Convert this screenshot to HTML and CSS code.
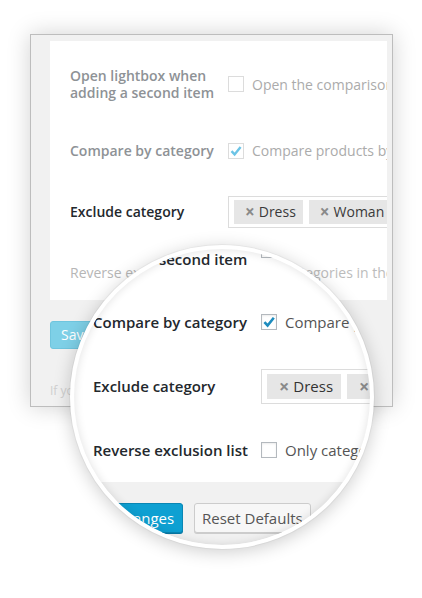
FILE: index.html
```html
<!DOCTYPE html>
<html>
<head>
<meta charset="utf-8">
<link rel="stylesheet" href="styles.css">
</head>
<body>
<div class="stage">
  <div class="card">
    <div class="panel">
      <div class="row row-first">
        <div class="label faded1">Open lightbox when<br>adding a second item</div>
        <div class="field"><span class="cb cb-faded"></span><span class="desc">Open the comparison lightbox</span></div>
      </div>
      <div class="row">
        <div class="label faded1">Compare by category</div>
        <div class="field"><span class="cb cb-faded"><svg viewBox="0 0 16 16" width="16" height="16"><path d="M3.5 8.2 L6.6 11.4 L12.6 4" fill="none" stroke="#6cc4e6" stroke-width="2.4"/></svg></span><span class="desc">Compare products by category</span></div>
      </div>
      <div class="row">
        <div class="label dark">Exclude category</div>
        <div class="field">
          <div class="tagbox">
            <span class="tag"><span class="x">×</span>Dress</span>
            <span class="tag"><span class="x">×</span>Woman</span>
          </div>
        </div>
      </div>
      <div class="row">
        <div class="label faded2">Reverse exclusion list</div>
        <div class="field"><span class="cb cb-faded"></span><span class="desc desc2">Only categories in the list</span></div>
      </div>
    </div>
    <div class="actions">
      <span class="btn btn-faded">Save Changes</span>
    </div>
    <p class="note">If you change these settings</p>
  </div>

  <div class="lens">
    <div class="zplane">
      <div class="zpanel">
        <div class="zrow zrow-first">
          <div class="zlabel">Open lightbox when<br>adding a second item</div>
          <div class="zfield"><span class="zcb"></span><span class="zdesc">Open the comparison</span></div>
        </div>
        <div class="zrow">
          <div class="zlabel">Compare by category</div>
          <div class="zfield"><span class="zcb"><svg viewBox="0 0 16 16" width="16" height="16"><path d="M3.4 8.2 L6.6 11.5 L12.8 3.8" fill="none" stroke="#1e8cbe" stroke-width="2.6"/></svg></span><span class="zdesc">Compare products</span></div>
        </div>
        <div class="zrow">
          <div class="zlabel">Exclude category</div>
          <div class="zfield">
            <div class="ztagbox">
              <span class="ztag"><span class="x">×</span>Dress</span>
              <span class="ztag"><span class="x">×</span>Woman</span>
            </div>
          </div>
        </div>
        <div class="zrow">
          <div class="zlabel">Reverse exclusion list</div>
          <div class="zfield"><span class="zcb"></span><span class="zdesc">Only categories</span></div>
        </div>
      </div>
      <div class="zactions">
        <span class="zbtn zbtn-primary">Save Changes</span>
        <span class="zbtn">Reset Defaults</span>
      </div>
    </div>
  </div>
</div>
</body>
</html>
```
FILE: styles.css
```css
* { box-sizing: border-box; }
html, body { margin: 0; padding: 0; background: #fff; }
body { font-family: "Open Sans", "DejaVu Sans", sans-serif; }

.stage {
  position: relative;
  width: 422px;
  height: 598px;
  overflow: hidden;
  padding: 34px 0 0 30px;
}

.card {
  width: 363px;
  height: 373px;
  border: 1px solid #bdbdbd;
  background: #f1f1f1;
  box-shadow: 0 0 22px rgba(0, 0, 0, 0.18);
  padding: 6px 5px 0 19px;
  overflow: hidden;
}

.panel {
  background: #fff;
  height: 259px;
  padding: 7px 0 0 20px;
  overflow: hidden;
}

.row {
  display: flex;
  align-items: center;
  height: 61px;
  white-space: nowrap;
}
.row-first { height: 72px; }

.label {
  width: 158px;
  flex: none;
  font-size: 14px;
  font-weight: 600;
  line-height: 17px;
}
.faded1 { color: #8e9296; }
.faded2 { color: #b6b6b6; font-weight: 400; }
.dark { color: #23282d; }

.field {
  display: flex;
  align-items: center;
  font-size: 14px;
  color: #ababab;
}

.cb {
  width: 16px;
  height: 16px;
  flex: none;
  border: 1px solid #dcdcdc;
  background: #fff;
  margin-right: 8px;
  position: relative;
}
.cb svg, .zcb svg { position: absolute; left: -1px; top: -1px; }

.desc2 { color: #bcbcbc; }

.tagbox {
  display: flex;
  gap: 6px;
  border: 1px solid #dcdcdc;
  padding: 3px 5px;
  height: 32px;
  width: 200px;
}
.tag {
  display: flex;
  align-items: center;
  height: 24px;
  background: #e6e6e6;
  color: #3a3a3a;
  font-size: 14px;
  padding: 0 7px 0 11px;
}
.tag .x, .ztag .x {
  color: #8a8a8a;
  font-weight: 700;
  font-size: 17px;
  line-height: 1;
  margin-right: 4px;
}

.actions {
  padding-top: 21px;
  height: 49px;
}
.btn {
  display: inline-block;
  height: 28px;
  line-height: 26px;
  font-size: 14px;
  padding: 0 10px;
  border-radius: 3px;
}
.btn-faded {
  background: #7ed0e7;
  border: 1px solid #6fc5de;
  color: #fff;
}
.note {
  margin: 33px 0 0;
  font-size: 12px;
  color: #cfcfcf;
}

/* magnifier lens */
.lens {
  position: absolute;
  left: 70px;
  top: 245px;
  width: 304px;
  height: 304px;
  border-radius: 50%;
  border: 4px solid #fff;
  box-shadow: 0 3px 18px rgba(0, 0, 0, 0.2), 0 0 0 1px rgba(0, 0, 0, 0.04);
  overflow: hidden;
  background: #f1f1f1;
}
.lens::after {
  content: "";
  position: absolute;
  inset: 0;
  border-radius: 50%;
  box-shadow: inset 0 0 10px rgba(0, 0, 0, 0.12);
  pointer-events: none;
}

.zplane {
  margin-top: -39px;
  width: 420px;
}
.zpanel {
  background: #fff;
  padding-left: 19px;
}
.zrow {
  display: flex;
  align-items: center;
  height: 64px;
  white-space: nowrap;
}
.zrow-first { height: 80px; }

.zlabel {
  width: 168px;
  flex: none;
  font-size: 15px;
  font-weight: 600;
  line-height: 19px;
  color: #23282d;
}
.zfield {
  display: flex;
  align-items: center;
  font-size: 15px;
  color: #555;
}
.zcb {
  width: 16px;
  height: 16px;
  flex: none;
  border: 1px solid #b4b9be;
  background: #fff;
  box-shadow: inset 0 1px 2px rgba(0, 0, 0, 0.08);
  margin-right: 8px;
  position: relative;
}
.ztagbox {
  display: flex;
  gap: 6px;
  border: 1px solid #dcdcdc;
  padding: 4px 5px;
  height: 35px;
  width: 220px;
}
.ztag {
  display: flex;
  align-items: center;
  height: 25px;
  background: #e6e6e6;
  color: #333;
  font-size: 15px;
  padding: 0 8px 0 12px;
}
.ztag .x { font-size: 18px; }

.zactions {
  display: flex;
  gap: 11px;
  padding: 21px 0 0 0;
  margin-left: -5px;
  height: 90px;
}
.zbtn {
  display: inline-block;
  height: 30px;
  line-height: 28px;
  font-size: 15px;
  padding: 0 7px;
  border-radius: 3px;
  border: 1px solid #cccccc;
  background: #f7f7f7;
  color: #555;
  box-shadow: 0 1px 0 #ccc;
  white-space: nowrap;
}
.zbtn-primary {
  width: 114px;
  background: #0ea0d2;
  border-color: #0a86b4;
  color: #fff;
  box-shadow: 0 1px 0 #0978a4;
  text-align: center;
}
```
